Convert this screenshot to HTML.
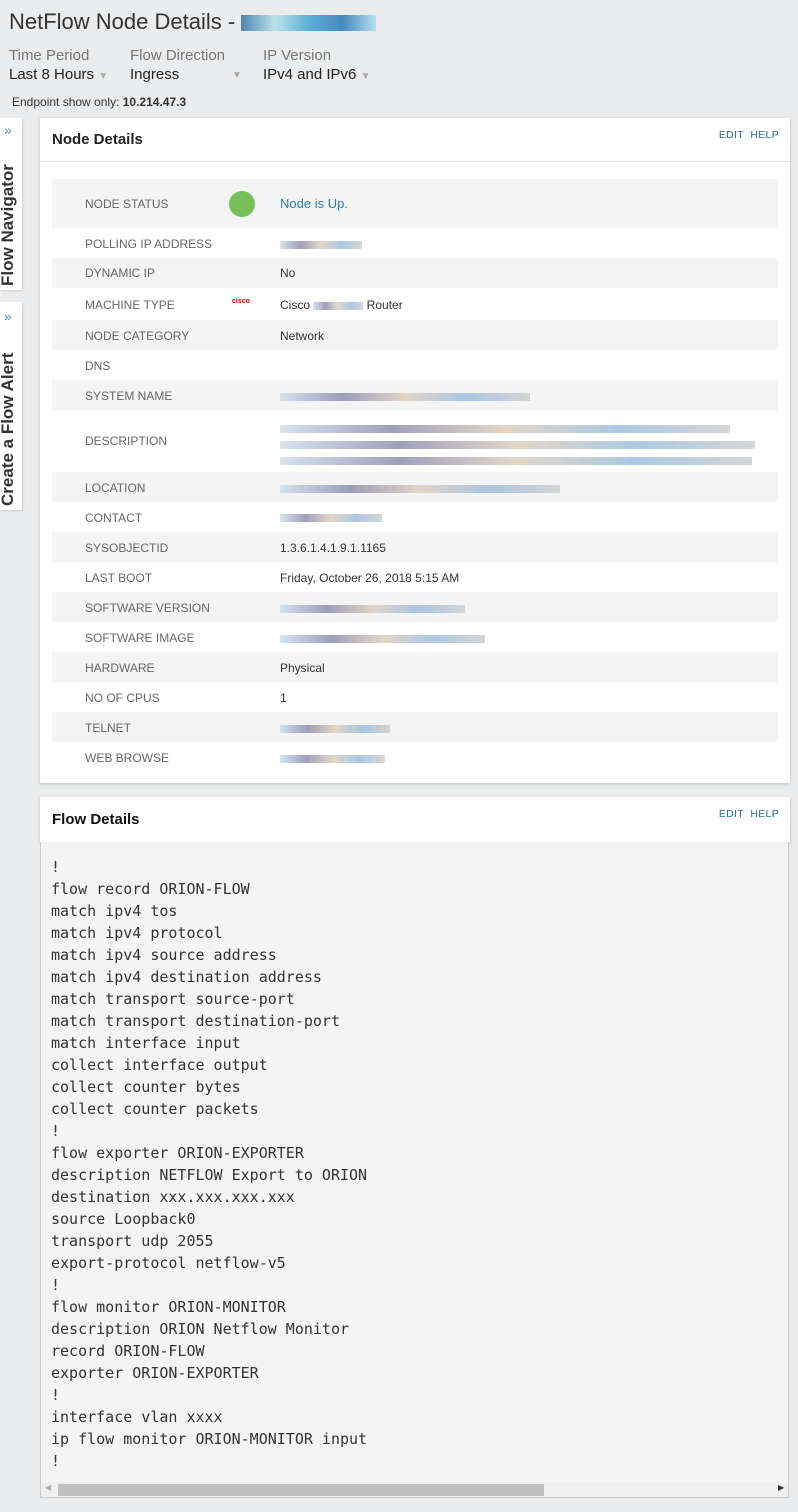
<!DOCTYPE html>
<html><head><style>
body{margin:0;width:798px;height:1512px;background:#ebeced;font-family:"Liberation Sans",sans-serif;position:relative;overflow:hidden;color:#333}
.abs{position:absolute}
.lbl{color:#777;font-size:15px}
.val{color:#222;font-size:15px}
.tab{position:absolute;left:0;width:22px;background:#fff;box-shadow:1px 1px 2px #ccc}
.tab span{position:absolute;transform:rotate(-90deg);transform-origin:left top;font-weight:bold;font-size:17px;color:#333;white-space:nowrap}
.panel{position:absolute;left:40px;width:750px;background:#fff;box-shadow:0 1px 3px #bbb}
.row{position:absolute;left:12px;width:726px;font-size:12px}
.row .k{position:absolute;left:33px;color:#666}
.row .v{position:absolute;left:228px;color:#333}
.g{background:#f4f4f4}
.blur{display:inline-block;height:8px;background:linear-gradient(90deg,#cde,#88a,#dcb,#9bd,#ccc);opacity:.8;vertical-align:middle}
pre{margin:0;font-family:"DejaVu Sans Mono",monospace;font-size:15px;line-height:22px;color:#333}
.eh{position:absolute;right:11px;font-size:10.5px;color:#2b6e8c;letter-spacing:.3px}
</style></head><body>
<div class="abs" style="left:9px;top:9px;font-size:22px;color:#333">NetFlow Node Details - <span class="blur" style="width:135px;height:16px;background:linear-gradient(90deg,#2a6aa0,#b0e0ea,#3aa0d0,#1a70b0,#aaddee)"></span></div>
<div class="abs lbl" style="left:9px;top:47px">Time Period</div>
<div class="abs val" style="left:9px;top:66px">Last 8 Hours <span style="color:#aaa;font-size:10px">▼</span></div>
<div class="abs lbl" style="left:130px;top:47px">Flow Direction</div>
<div class="abs val" style="left:130px;top:66px">Ingress</div>
<div class="abs" style="left:232px;top:70px;color:#aaa;font-size:10px">▼</div>
<div class="abs lbl" style="left:263px;top:47px">IP Version</div>
<div class="abs val" style="left:263px;top:66px">IPv4 and IPv6 <span style="color:#aaa;font-size:10px">▼</span></div>
<div class="abs" style="left:12px;top:95px;font-size:12px;color:#333">Endpoint show only: <b>10.214.47.3</b></div>

<div class="tab" style="top:118px;height:172px"><div style="position:absolute;left:4px;top:4px;color:#5a8fb0;font-size:14px">»</div><span style="left:-2px;top:168px">Flow Navigator</span></div>
<div class="tab" style="top:302px;height:208px"><div style="position:absolute;left:4px;top:6px;color:#5a8fb0;font-size:14px">»</div><span style="left:-2px;top:204px">Create a Flow Alert</span></div>

<div class="panel" style="top:118px;height:665px">
<div class="abs" style="left:12px;top:13px;font-weight:bold;font-size:15px;color:#222">Node Details</div>
<div class="eh" style="top:11px">EDIT&nbsp; HELP</div>
<div class="abs" style="left:0;top:43px;width:750px;height:1px;background:#ddd"></div>

<div class="row g" style="top:61px;height:49px"><span class="k" style="top:18px">NODE STATUS</span><span class="abs" style="left:177px;top:12px;width:26px;height:26px;border-radius:50%;background:#78c05a"></span><span class="v" style="top:17px;color:#2b7fa8;font-size:13px">Node is Up.</span></div>
<div class="row" style="top:110px;height:30px"><span class="k" style="top:9px">POLLING IP ADDRESS</span><span class="v" style="top:9px"><span class="blur" style="width:82px"></span></span></div>
<div class="row g" style="top:140px;height:30px"><span class="k" style="top:8px">DYNAMIC IP</span><span class="v" style="top:8px">No</span></div>
<div class="row" style="top:170px;height:32px"><span class="k" style="top:10px">MACHINE TYPE</span><span class="abs" style="left:180px;top:10px;font-size:7px;color:#c00;font-weight:bold">cisco</span><span class="v" style="top:10px">Cisco <span class="blur" style="width:50px"></span> Router</span></div>
<div class="row g" style="top:202px;height:30px"><span class="k" style="top:9px">NODE CATEGORY</span><span class="v" style="top:9px">Network</span></div>
<div class="row" style="top:232px;height:30px"><span class="k" style="top:9px">DNS</span></div>
<div class="row g" style="top:262px;height:30px"><span class="k" style="top:9px">SYSTEM NAME</span><span class="v" style="top:9px"><span class="blur" style="width:250px"></span></span></div>
<div class="row" style="top:292px;height:62px"><span class="k" style="top:24px">DESCRIPTION</span><span class="v" style="top:10px;line-height:16px"><span class="blur" style="width:450px"></span><br><span class="blur" style="width:475px"></span><br><span class="blur" style="width:472px"></span></span></div>
<div class="row g" style="top:354px;height:30px"><span class="k" style="top:9px">LOCATION</span><span class="v" style="top:9px"><span class="blur" style="width:280px"></span></span></div>
<div class="row" style="top:384px;height:30px"><span class="k" style="top:9px">CONTACT</span><span class="v" style="top:8px"><span class="blur" style="width:102px"></span></span></div>
<div class="row g" style="top:414px;height:30px"><span class="k" style="top:9px">SYSOBJECTID</span><span class="v" style="top:9px">1.3.6.1.4.1.9.1.1165</span></div>
<div class="row" style="top:444px;height:30px"><span class="k" style="top:9px">LAST BOOT</span><span class="v" style="top:9px">Friday, October 26, 2018 5:15 AM</span></div>
<div class="row g" style="top:474px;height:30px"><span class="k" style="top:9px">SOFTWARE VERSION</span><span class="v" style="top:9px"><span class="blur" style="width:185px"></span></span></div>
<div class="row" style="top:504px;height:30px"><span class="k" style="top:9px">SOFTWARE IMAGE</span><span class="v" style="top:9px"><span class="blur" style="width:205px"></span></span></div>
<div class="row g" style="top:534px;height:30px"><span class="k" style="top:9px">HARDWARE</span><span class="v" style="top:9px">Physical</span></div>
<div class="row" style="top:564px;height:30px"><span class="k" style="top:9px">NO OF CPUS</span><span class="v" style="top:9px">1</span></div>
<div class="row g" style="top:594px;height:30px"><span class="k" style="top:9px">TELNET</span><span class="v" style="top:9px"><span class="blur" style="width:110px"></span></span></div>
<div class="row" style="top:624px;height:30px"><span class="k" style="top:9px">WEB BROWSE</span><span class="v" style="top:9px"><span class="blur" style="width:105px"></span></span></div>
</div>

<div class="panel" style="top:797px;height:45px">
<div class="abs" style="left:12px;top:14px;font-weight:bold;font-size:15px;color:#111">Flow Details</div>
<div class="eh" style="top:11px">EDIT&nbsp; HELP</div>
</div>
<div class="abs" style="left:40px;top:842px;width:747px;height:655px;background:#f4f4f4;border:1px solid #ccc;border-top:none">
<pre style="position:absolute;left:10px;top:14px">!
flow record ORION-FLOW
match ipv4 tos
match ipv4 protocol
match ipv4 source address
match ipv4 destination address
match transport source-port
match transport destination-port
match interface input
collect interface output
collect counter bytes
collect counter packets
!
flow exporter ORION-EXPORTER
description NETFLOW Export to ORION
destination xxx.xxx.xxx.xxx
source Loopback0
transport udp 2055
export-protocol netflow-v5
!
flow monitor ORION-MONITOR
description ORION Netflow Monitor
record ORION-FLOW
exporter ORION-EXPORTER
!
interface vlan xxxx
ip flow monitor ORION-MONITOR input
!</pre>
<div class="abs" style="left:0;top:640px;width:747px;height:15px;background:#f0f0f0"></div>
<div class="abs" style="left:17px;top:642px;width:486px;height:12px;background:#c0c0c0"></div>
<div class="abs" style="left:4px;top:641px;font-size:8px;color:#aaa">◀</div>
<div class="abs" style="left:737px;top:641px;font-size:8px;color:#333">▶</div>
</div>
</body></html>
